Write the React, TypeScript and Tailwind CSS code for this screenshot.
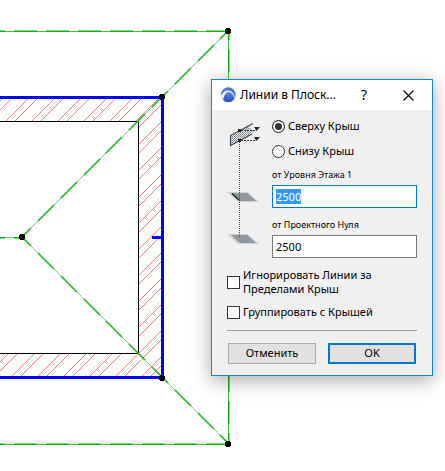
import { useEffect, useRef } from "react";
import type { ReactNode } from "react";

const range = (n: number) => Array.from({ length: n }, (_, i) => i);

const WALL = "M0 97H162V378H0V353H138V121H0Z";

function Hatching() {
  return (
    <g clipPath="url(#wall)" stroke="#f77b74" strokeWidth="1" shapeRendering="crispEdges">
      {range(20).map((k) => {
        const c = Math.round(101 + 26.06 * k);
        return (
          <g key={k}>
            <line x1={c - 400} y1={400} x2={c - 80} y2={80} />
            <line x1={c - 391} y1={400} x2={c - 71} y2={80} />
          </g>
        );
      })}
    </g>
  );
}

function Eave({ y }: { y: number }) {
  return (
    <g shapeRendering="crispEdges">
      <rect x="0" y={y + 1} width="228" height="1" fill="#3fc13f" />
      {range(8).map((k) => (
        <g key={k}>
          <rect x={k * 32 - 18} y={y} width={Math.min(23, 246 - k * 32)} height="1" fill="#7ddb7d" />
          <rect x={k * 32 - 18} y={y + 1} width={Math.min(23, 246 - k * 32)} height="1" fill="#17a817" />
        </g>
      ))}
    </g>
  );
}

function Hip({ dir }: { dir: 1 | -1 }) {
  const at = (x: number) => 237 + dir * (x - 22);
  return (
    <g stroke="#27b127">
      <line x1={22} y1={at(22)} x2={228} y2={at(228)} strokeWidth="0.8" opacity="0.75" />
      {range(10).map((k) => {
        const a = Math.max(22, Math.round(15.2 + 22.8 * k));
        const b = Math.min(228, Math.round(31.2 + 22.8 * k));
        return <line key={k} x1={a} y1={at(a)} x2={b} y2={at(b)} strokeWidth="1.7" />;
      })}
    </g>
  );
}

function Node({ x, y }: { x: number; y: number }) {
  return <path d={`M${x - 2} ${y - 3}h4v1h1v4h-1v1h-4v-1h-1v-4h1z`} fill="#000" shapeRendering="crispEdges" />;
}

function Plan() {
  return (
    <svg className="block" width="445" height="471" viewBox="0 0 445 471" aria-hidden="true">
      <defs>
        <clipPath id="wall">
          <path d={WALL} />
        </clipPath>
      </defs>
      <Hatching />
      <g shapeRendering="crispEdges">
        <path d="M0 121h139v233H0v-1h138V122H0z" fill="#000" />
        <path d="M0 96h164v283H0v-3h161V99H0z" fill="#00f" />
        <rect x="152" y="236" width="10" height="3" fill="#00f" />
      </g>
      <Eave y={30} />
      <Eave y={443} />
      <g shapeRendering="crispEdges">
        <rect x="228" y="31" width="1" height="413" fill="#3fc13f" />
        {range(14).map((k) => (
          <g key={k}>
            <rect x="229" y={17 + k * 32 + (k === 0 ? 14 : 0)} width="1" height={k === 0 ? 9 : k === 13 ? 11 : 23} fill="#7ddb7d" />
            <rect x="228" y={17 + k * 32 + (k === 0 ? 14 : 0)} width="1" height={k === 0 ? 9 : k === 13 ? 11 : 23} fill="#17a817" />
          </g>
        ))}
        <rect x="0" y="237" width="22" height="1" fill="#62cc62" />
        <rect x="0" y="237" width="5" height="1" fill="#17a817" />
        <rect x="0" y="238" width="5" height="1" fill="#7ddb7d" />
        <rect x="14" y="237" width="8" height="1" fill="#17a817" />
        <rect x="14" y="238" width="8" height="1" fill="#7ddb7d" />
      </g>
      <Hip dir={1} />
      <Hip dir={-1} />
      <Node x={228} y={31} />
      <Node x={162} y={97} />
      <Node x={22} y={237} />
      <Node x={162} y={378} />
      <Node x={228} y={444} />
    </svg>
  );
}

function AppLogo() {
  return (
    <svg className="shrink-0" width="16" height="16" viewBox="0 0 16 16" aria-hidden="true">
      <defs>
        <linearGradient id="logo" x1="0" y1="0" x2="0" y2="1">
          <stop offset="0" stopColor="#5f8de0" />
          <stop offset="1" stopColor="#2148b0" />
        </linearGradient>
        <clipPath id="disc">
          <circle cx="8.300" cy="7.700" r="7.400" />
        </clipPath>
      </defs>
      <g clipPath="url(#disc)">
        <rect width="16" height="16" fill="#4f7bd2" />
        <path d="M0 11C2 6 4.500 3.500 8 3.500c3.500 0 6 3 7.500 9V16H0z" fill="#e9f0fc" />
        <path d="M3 16C3 11 4.500 5.500 8.500 5c3 0 5.200 3 6.500 8V16z" fill="url(#logo)" />
      </g>
    </svg>
  );
}

function LevelDiagram() {
  return (
    <svg className="block" width="36" height="128" viewBox="227 118 36 128" aria-hidden="true">
      <defs>
        <pattern id="dots" width="2" height="2" patternUnits="userSpaceOnUse">
          <rect width="2" height="2" fill="#e2e4e5" />
          <rect width="1" height="1" fill="#7c8388" />
          <rect x="1" y="1" width="1" height="1" fill="#9a9fa4" />
        </pattern>
      </defs>
      <path d="M230.500 135.500L253 123.500L249 127.500L254 131L250 135L230.500 145.500Z" fill="url(#dots)" />
      <path d="M253 123.500L230.500 135.500V145.500L252 134" fill="none" stroke="#41484d" strokeWidth="1.100" />
      <g fill="#20282e" shapeRendering="crispEdges">
        <rect x="238" y="129" width="3" height="3" />
        <rect x="238" y="139" width="3" height="3" />
      </g>
      <path d="M254 127h6l-3.500 4zM254 137h6l-3.500 4z" fill="#20282e" />
      <path d="M241 130.500H256M241 140.500H256" stroke="#30383e" strokeDasharray="2 1" />
      {[192, 234].map((y) => (
        <g key={y}>
          <path d={`M227 ${y}h21l11 10h-21z`} fill="#d0d1d2" />
          <path d={`M231 ${y + 1}h16l9 8h-16z`} fill="#91989d" />
        </g>
      ))}
      <path d="M232 193.500L239 200" stroke="#1e2b2b" strokeWidth="1.600" />
      <path d="M239.500 142V238" stroke="#3d4d5a" strokeDasharray="1 1" shapeRendering="crispEdges" />
    </svg>
  );
}

function Radio({ label, checked }: { label: string; checked?: boolean }) {
  return (
    <label className="flex h-[25px] items-center gap-[3px] whitespace-nowrap">
      <input
        type="radio"
        name="plane"
        defaultChecked={checked}
        className="size-[13px] shrink-0 appearance-none rounded-full border border-[#333] bg-white checked:bg-[#333] checked:shadow-[inset_0_0_0_2px_white]"
      />
      {label}
    </label>
  );
}

const FIELD = "h-[23px] w-full border bg-white px-[3px] text-[11px] leading-[13px] outline-none selection:bg-[#3399ff] selection:text-white";

function Check({ children }: { children: ReactNode }) {
  return (
    <label className="flex items-center gap-[3px] leading-[14px]">
      <input
        type="checkbox"
        className="size-[13px] shrink-0 appearance-none border border-[#333] bg-white checked:bg-[#0078d7]"
      />
      <span>{children}</span>
    </label>
  );
}

export default function App() {
  const storey = useRef<HTMLInputElement>(null);
  useEffect(() => {
    storey.current?.focus();
    storey.current?.select();
  }, []);

  return (
    <main className="relative min-h-screen overflow-hidden bg-white font-['Noto_Sans','Open_Sans',sans-serif] text-[11px] text-black">
      <Plan />
      <section
        role="dialog"
        aria-labelledby="dialog-title"
        className="absolute top-[79px] left-[211px] w-[222px] border border-[#1883d7] bg-[#f0f0f0] shadow-[0_4px_18px_rgba(0,0,0,0.35)]"
      >
        <header className="flex h-[30px] items-center bg-white pl-2">
          <AppLogo />
          <h1 id="dialog-title" className="ml-1 grow text-xs whitespace-nowrap">
            Линии в Плоск...
          </h1>
          <button type="button" aria-label="Справка" className="mr-3.5 w-7 text-sm">
            ?
          </button>
          <button type="button" aria-label="Закрыть" className="mr-2 flex size-8 items-center justify-center">
            <svg width="11" height="11" viewBox="0 0 11 11" aria-hidden="true">
              <path d="M0.500 0.500L10.500 10.500M10.500 0.500L0.500 10.500" stroke="#000" strokeWidth="1.100" />
            </svg>
          </button>
        </header>
        <form className="px-[15px] pt-1 pb-[11px]" onSubmit={(e) => e.preventDefault()}>
          <div className="flex">
            <div className="w-[45px] shrink-0 pt-1">
              <LevelDiagram />
            </div>
            <div className="grow">
              <Radio label="Сверху Крыш" checked />
              <Radio label="Снизу Крыш" />
              <label htmlFor="storey" className="flex h-[21px] items-center text-[9px]">
                от Уровня Этажа 1
              </label>
              <input id="storey" ref={storey} defaultValue="2500" className={`${FIELD} border-[#0078d7]`} />
              <label htmlFor="zero" className="mt-[6px] flex h-[21px] items-center text-[9px]">
                от Проектного Нуля
              </label>
              <input id="zero" defaultValue="2500" className={`${FIELD} border-[#7a7a7a]`} />
            </div>
          </div>
          <div className="mt-2.5 flex flex-col gap-[9px]">
            <Check>
              Игнорировать Линии за
              <br />
              Пределами Крыш
            </Check>
            <Check>Группировать с Крышей</Check>
          </div>
          <hr className="mt-[11px] border-[#a0a0a0]" />
          <div className="mt-3 grid grid-cols-2 gap-3 px-px">
            <button type="button" className="h-[21px] border border-[#adadad] bg-[#e1e1e1]">
              Отменить
            </button>
            <button type="submit" className="h-[21px] border-2 border-[#0078d7] bg-[#e1e1e1]">
              OK
            </button>
          </div>
        </form>
      </section>
    </main>
  );
}
